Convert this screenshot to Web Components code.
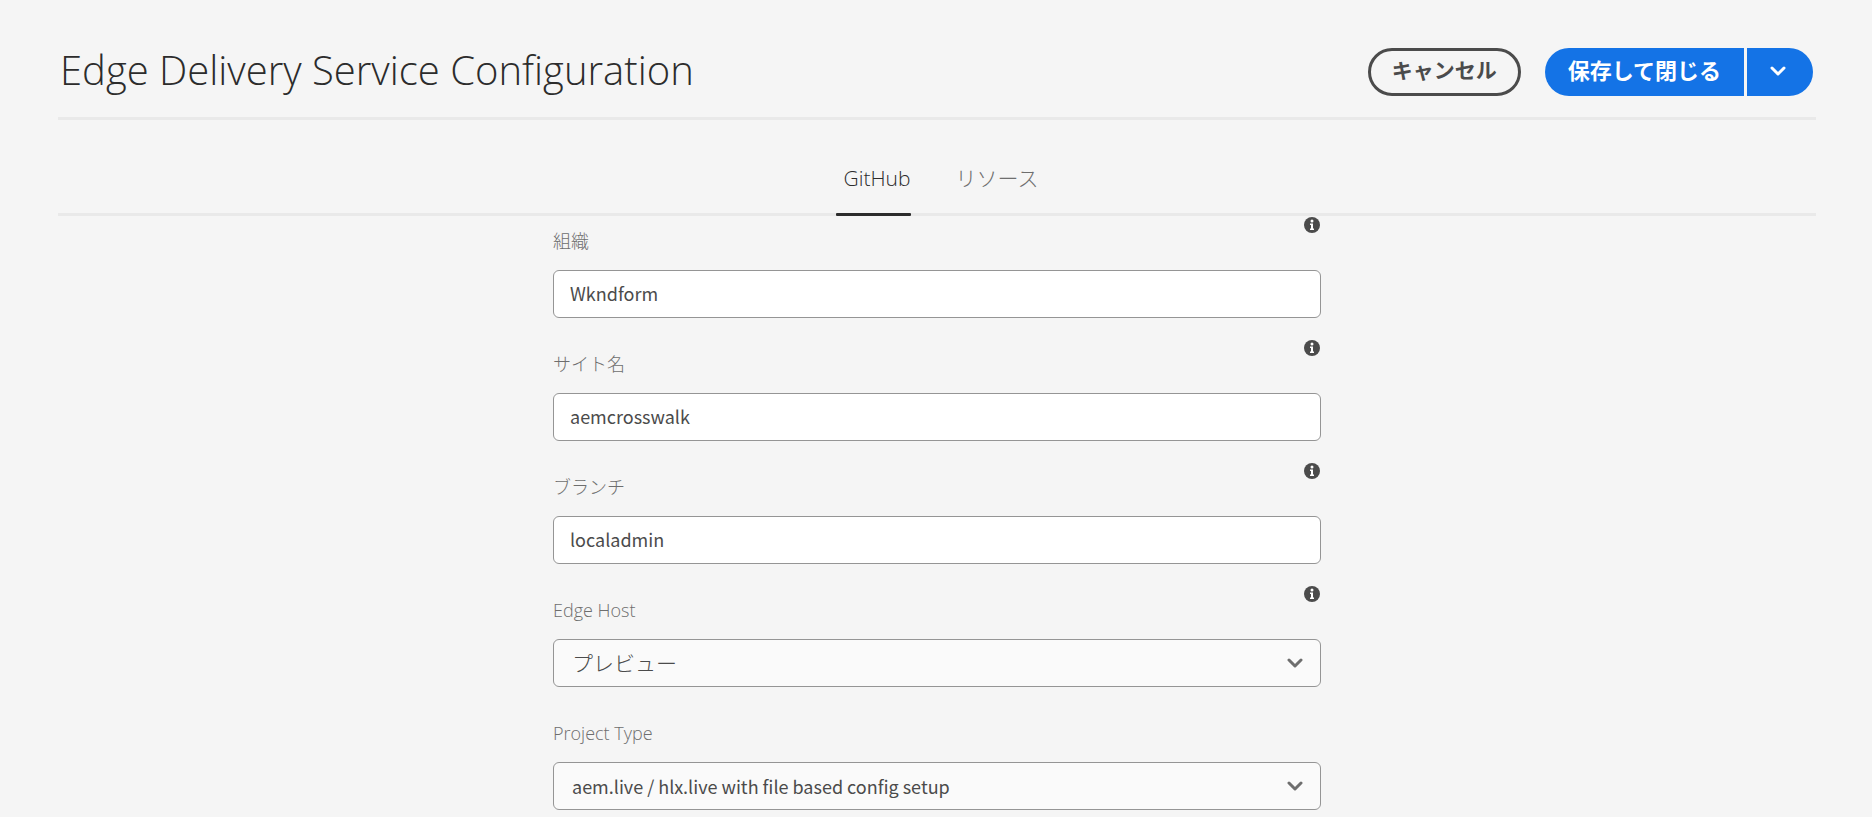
<!DOCTYPE html>
<html lang="ja">
<head>
<meta charset="utf-8">
<meta name="viewport" content="width=device-width, initial-scale=1">
<title>Edge Delivery Service Configuration</title>
<style>
body { margin: 0; background: #f5f5f5; color: #4b4b4b; font-family: "Open Sans", "Noto Sans CJK JP", sans-serif; }
</style>
</head>
<body>
<config-page>
  <page-header slot="header">
    Edge Delivery Service Configuration
    <pill-button slot="actions">キャンセル</pill-button>
    <split-button slot="actions">保存して閉じる</split-button>
  </page-header>
  <tab-list slot="tabs">
    <tab-item selected>GitHub</tab-item>
    <tab-item>リソース</tab-item>
  </tab-list>
  <text-field info value="Wkndform">組織</text-field>
  <text-field info value="aemcrosswalk">サイト名</text-field>
  <text-field info value="localadmin">ブランチ</text-field>
  <select-field info value="プレビュー">Edge Host</select-field>
  <select-field value="aem.live / hlx.live with file based config setup">Project Type</select-field>
</config-page>
<script>
const define = (name, html, setup) => {
  const template = document.createElement('template');
  template.innerHTML = html;
  customElements.define(name, class extends HTMLElement {
    connectedCallback() {
      if (this.shadowRoot) return;
      const root = this.attachShadow({ mode: 'open' });
      root.append(template.content.cloneNode(true));
      if (setup) setup(this, root);
    }
  });
};

define('config-page', `
<style>
:host { display: block; }
.frame { padding: 0 56px 0 58px; }
form { width: 768px; max-width: 100%; margin: 0 auto; display: grid; gap: 21px; padding-bottom: 24px; }
</style>
<div class="frame">
  <slot name="header"></slot>
  <slot name="tabs"></slot>
  <main><form><slot></slot></form></main>
</div>`);

define('page-header', `
<style>
:host { display: block; border-bottom: 3px solid #e9e9e9; }
header { display: flex; align-items: flex-start; justify-content: space-between; padding: 48px 3px 21px 0; }
h1 { margin: 0; padding-left: 2px; font-size: 40px; line-height: 44px; font-weight: 300; color: #2c2c2c; }
.actions { display: flex; gap: 24px; }
</style>
<header><h1><slot></slot></h1><div class="actions"><slot name="actions"></slot></div></header>`);

define('pill-button', `
<style>
:host { display: block; }
button { box-sizing: border-box; height: 48px; padding: 0 21px 6px; border: 3px solid #4b4b4b; border-radius: 24px; background: transparent; color: #4b4b4b; font: 700 21px/32px "Noto Sans CJK JP", sans-serif; white-space: nowrap; }
</style>
<button type="button"><slot></slot></button>`);

define('split-button', `
<style>
:host { display: flex; gap: 3px; }
button { height: 48px; border: 0; background: #1473e6; color: #fff; font: 700 22px/32px "Noto Sans CJK JP", sans-serif; white-space: nowrap; }
.main { padding: 0 23px 6px; border-radius: 24px 0 0 24px; }
.more { width: 66px; padding: 0 4px 0 0; border-radius: 0 24px 24px 0; display: grid; place-items: center; }
</style>
<button class="main" type="button"><slot></slot></button>
<button class="more" type="button" aria-label="その他の保存オプション">
  <svg width="16" height="12" viewBox="0 0 16 12" fill="none" stroke="#fff" stroke-width="3" stroke-linecap="round" stroke-linejoin="round"><path d="M2 2l6 6 6-6"/></svg>
</button>`);

define('tab-list', `
<style>
:host { display: block; border-bottom: 3px solid #e9e9e9; }
nav { display: flex; justify-content: center; gap: 37px; height: 93px; }
</style>
<nav><slot></slot></nav>`);

define('tab-item', `
<style>
:host { display: block; }
a { position: relative; display: block; height: 93px; padding-left: 8px; box-sizing: border-box; padding-top: 42px; font-size: 21px; line-height: 32px; font-weight: 300; color: #6e6e6e; text-decoration: none; }
:host([selected]) a { color: #2c2c2c; }
:host([selected]) a::after { content: ""; position: absolute; left: 0; right: 0; bottom: -3px; height: 3px; border-radius: 1px; background: #2c2c2c; }
</style>
<a href="#"><slot></slot></a>`);

const infoButton = `
<button class="info" type="button" aria-label="詳細情報">
  <svg width="16" height="16" viewBox="0 0 16 16"><circle cx="8" cy="8" r="8" fill="#4b4b4b"/><circle cx="8" cy="4" r="1.5" fill="#fff"/><path d="M6 6.500h3v5h1V13H6v-1.500h1V8H6z" fill="#fff"/></svg>
</button>`;

const fieldStyle = `
:host { display: block; }
.head { display: flex; justify-content: space-between; align-items: flex-start; height: 54px; }
label { padding-top: 12px; font-size: 18px; line-height: 26px; font-weight: 300; color: #6e6e6e; }
.info { display: block; padding: 1px 1px 0 0; border: 0; background: none; line-height: 0; }
:host(:not([info])) .info { display: none; }
input, select { display: block; box-sizing: border-box; width: 100%; height: 48px; margin: 0; border: 1px solid #959595; border-radius: 6px; color: #4b4b4b; font: 400 18px/28px "Noto Sans CJK JP", sans-serif; outline: 0; }`;

define('text-field', `
<style>${fieldStyle}
input { padding: 0 16px 2px; background: #fff; }
</style>
<div class="head"><label for="control"><slot></slot></label>${infoButton}</div>
<input id="control" type="text">`, (host, root) => {
  root.querySelector('input').value = host.getAttribute('value');
});

define('select-field', `
<style>${fieldStyle}
.box { display: grid; align-items: center; }
.box > * { grid-area: 1 / 1; }
select { appearance: none; padding: 0 48px 0 18px; background: #fafafa; }
select.kana { padding-bottom: 2px; font-size: 21px; font-weight: 300; }
.arrow { justify-self: end; margin-right: 18px; pointer-events: none; }
</style>
<div class="head"><label for="control"><slot></slot></label>${infoButton}</div>
<div class="box">
  <select id="control"></select>
  <svg class="arrow" width="16" height="12" viewBox="0 0 16 12" fill="none" stroke="#6e6e6e" stroke-width="3" stroke-linecap="round" stroke-linejoin="round"><path d="M2 3l6 6 6-6"/></svg>
</div>`, (host, root) => {
  const select = root.querySelector('select');
  const value = host.getAttribute('value');
  select.add(new Option(value));
  select.classList.toggle('kana', /[\u30a0-\u30ff]/.test(value));
});
</script>
</body>
</html>
